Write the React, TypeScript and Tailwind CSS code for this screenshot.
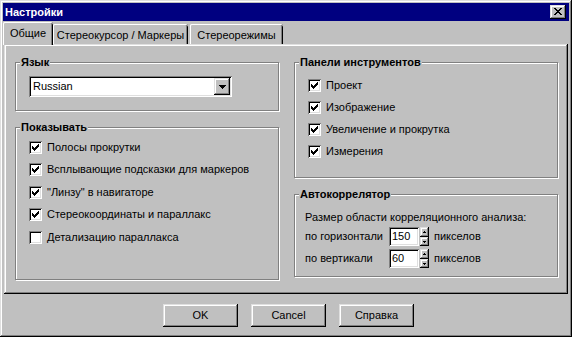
import React from "react";

const raised =
  "shadow-[inset_-1px_-1px_0_#000,inset_1px_1px_0_#fff,inset_-2px_-2px_0_#808080,inset_2px_2px_0_#dfdfdf]";
const raisedSoft =
  "shadow-[inset_-1px_-1px_0_#000,inset_1px_1px_0_#dfdfdf,inset_-2px_-2px_0_#808080,inset_2px_2px_0_#fff]";
const sunken =
  "shadow-[inset_1px_1px_0_#808080,inset_-1px_-1px_0_#fff,inset_2px_2px_0_#000,inset_-2px_-2px_0_#dfdfdf]";

function CheckBox({ checked }: { checked: boolean }) {
  const starts = [2, 3, 4, 3, 2, 1, 0];
  return (
    <span className={`w-[13px] h-[13px] bg-white ${sunken} flex items-center justify-center shrink-0`}>
      {checked && (
        <svg width="7" height="7" viewBox="0 0 7 7" shapeRendering="crispEdges">
          {starts.map((s, i) => (
            <rect key={i} x={i} y={s} width="1" height="3" fill="#000" />
          ))}
        </svg>
      )}
    </span>
  );
}

function Group({
  title,
  className,
  children,
}: {
  title: string;
  className: string;
  children?: React.ReactNode;
}) {
  return (
    <div
      className={`relative border border-[#808080] shadow-[inset_1px_1px_0_#fff,1px_1px_0_#fff] ${className}`}
    >
      <span className="absolute -top-[8px] left-[4px] bg-[#c0c0c0] px-[1px] font-bold leading-[14px] text-black">
        {title}
      </span>
      {children}
    </div>
  );
}

function CheckRow({ label, checked, h }: { label: string; checked: boolean; h: string }) {
  return (
    <div className={`flex items-center gap-[5px] ${h}`}>
      <CheckBox checked={checked} />
      <span className="leading-[13px] whitespace-nowrap">{label}</span>
    </div>
  );
}

function XGlyph() {
  const rects: [number, number, number][] = [
    [0, 0, 2], [6, 0, 2],
    [1, 1, 2], [5, 1, 2],
    [2, 2, 4],
    [3, 3, 2],
    [2, 4, 4],
    [1, 5, 2], [5, 5, 2],
    [0, 6, 2], [6, 6, 2],
  ];
  return (
    <svg width="8" height="7" viewBox="0 0 8 7" shapeRendering="crispEdges">
      {rects.map(([x, y, w], i) => (
        <rect key={i} x={x} y={y} width={w} height="1" fill="#000" />
      ))}
    </svg>
  );
}

function DownArrow() {
  return (
    <svg width="7" height="4" viewBox="0 0 7 4" shapeRendering="crispEdges">
      <rect x="0" y="0" width="7" height="1" fill="#000" />
      <rect x="1" y="1" width="5" height="1" fill="#000" />
      <rect x="2" y="2" width="3" height="1" fill="#000" />
      <rect x="3" y="3" width="1" height="1" fill="#000" />
    </svg>
  );
}

function SmallArrow({ up }: { up: boolean }) {
  return (
    <svg width="3" height="2" viewBox="0 0 3 2" shapeRendering="crispEdges">
      {up ? (
        <>
          <rect x="1" y="0" width="1" height="1" fill="#000" />
          <rect x="0" y="1" width="3" height="1" fill="#000" />
        </>
      ) : (
        <>
          <rect x="0" y="0" width="3" height="1" fill="#000" />
          <rect x="1" y="1" width="1" height="1" fill="#000" />
        </>
      )}
    </svg>
  );
}

function Spin({ value }: { value: string }) {
  return (
    <div className="flex items-stretch h-[19px]">
      <div className={`w-[30px] h-[19px] bg-white ${sunken} flex items-center pl-[3px] leading-[13px]`}>
        {value}
      </div>
      <div className="ml-[1px] w-[9px] flex flex-col">
        <div className={`h-[10px] ${raisedSoft} bg-[#c0c0c0] flex items-center justify-center`}>
          <SmallArrow up />
        </div>
        <div className={`h-[9px] ${raisedSoft} bg-[#c0c0c0] flex items-center justify-center`}>
          <SmallArrow up={false} />
        </div>
      </div>
    </div>
  );
}

function Button({ label }: { label: string }) {
  return (
    <div className={`w-[75px] h-[23px] ${raisedSoft} bg-[#c0c0c0] flex items-center justify-center leading-[13px]`}>
      {label}
    </div>
  );
}

export default function App() {
  const tab =
    "bg-[#c0c0c0] rounded-t-[2px] shadow-[inset_1px_0_0_#fff,inset_0_1px_0_#fff,inset_-1px_0_0_#000,inset_-2px_0_0_#808080] flex items-center whitespace-nowrap leading-[13px]";
  return (
    <div className="w-[572px] h-[337px] bg-[#c0c0c0] p-[3px] flex flex-col text-[11px] text-black font-['Liberation_Sans','Arial',sans-serif] shadow-[inset_-1px_-1px_0_#000,inset_1px_1px_0_#dfdfdf,inset_-2px_-2px_0_#808080,inset_2px_2px_0_#fff]">
      {/* Title bar */}
      <div className="h-[18px] bg-[#000080] flex items-center justify-between pl-[2px] pr-[3px] shrink-0">
        <span className="text-white font-bold leading-[14px]">Настройки</span>
        <div className={`w-[16px] h-[14px] ${raisedSoft} bg-[#c0c0c0] flex items-center justify-center pb-[1px]`}>
          <XGlyph />
        </div>
      </div>

      {/* Tabs */}
      <div className="mt-[1px] h-[22px] px-[1px] flex items-end shrink-0">
        <div className={`relative z-10 ml-[-1px] w-[50px] h-[23px] mb-[-1px] justify-center ${tab}`}>
          Общие
        </div>
        <div className={`w-[135px] h-[20px] pt-[2px] justify-center ${tab}`}>Стереокурсор / Маркеры</div>
        <div className={`ml-[2px] w-[93px] h-[20px] pt-[2px] justify-center ${tab}`}>Стереорежимы</div>
      </div>

      {/* Panel */}
      <div className={`mx-[1px] h-[250px] shrink-0 ${raisedSoft} flex pl-[11px] pt-[18px] gap-[15px]`}>
        {/* Left column */}
        <div className="flex flex-col w-[264px]">
          <Group title="Язык" className="h-[49px]">
            <div className={`ml-[13px] mt-[13px] w-[203px] h-[21px] bg-white ${sunken} flex items-center justify-between pl-[4px] pr-[2px]`}>
              <span className="leading-[13px]">Russian</span>
              <div className={`w-[16px] h-[17px] ${raisedSoft} bg-[#c0c0c0] flex items-center justify-center`}>
                <DownArrow />
              </div>
            </div>
          </Group>
          <Group title="Показывать" className="mt-[16px] h-[153px]">
            <div className="flex flex-col pl-[13px] pt-[8px]">
              <CheckRow label="Полосы прокрутки" checked h="h-[22px]" />
              <CheckRow label="Всплывающие подсказки для маркеров" checked h="h-[23px]" />
              <CheckRow label={"\"Линзу\" в навигаторе"} checked h="h-[22px]" />
              <CheckRow label="Стереокоординаты и параллакс" checked h="h-[23px]" />
              <CheckRow label="Детализацию параллакса" checked={false} h="h-[22px]" />
            </div>
          </Group>
        </div>

        {/* Right column */}
        <div className="flex flex-col w-[264px]">
          <Group title="Панели инструментов" className="h-[116px]">
            <div className="flex flex-col pl-[13px] pt-[11px]">
              <CheckRow label="Проект" checked h="h-[22px]" />
              <CheckRow label="Изображение" checked h="h-[22px]" />
              <CheckRow label="Увеличение и прокрутка" checked h="h-[22px]" />
              <CheckRow label="Измерения" checked h="h-[22px]" />
            </div>
          </Group>
          <Group title="Автокоррелятор" className="mt-[16px] h-[83px]">
            <div className="flex flex-col pl-[10px] pt-[14px]">
              <div className="h-[16px] flex items-center leading-[13px]">
                Размер области корреляционного анализа:
              </div>
              <div className="mt-[2px] flex items-center">
                <span className="w-[84px] leading-[13px]">по горизонтали</span>
                <Spin value="150" />
                <span className="ml-[5px] leading-[13px]">пикселов</span>
              </div>
              <div className="mt-[3px] flex items-center">
                <span className="w-[84px] leading-[13px]">по вертикали</span>
                <Spin value="60" />
                <span className="ml-[5px] leading-[13px]">пикселов</span>
              </div>
            </div>
          </Group>
        </div>
      </div>

      {/* Buttons */}
      <div className="flex pl-[160px] pt-[10px] gap-[13px]">
        <Button label="OK" />
        <Button label="Cancel" />
        <Button label="Справка" />
      </div>
    </div>
  );
}
